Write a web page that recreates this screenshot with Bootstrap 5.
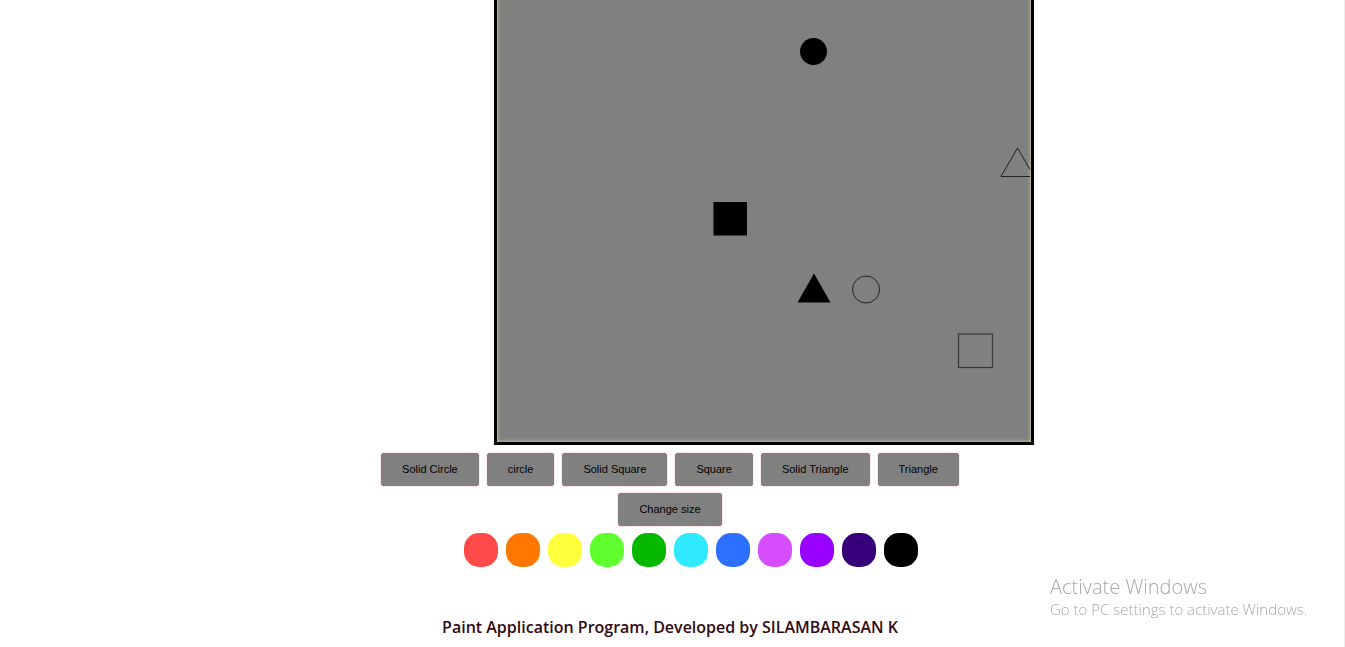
<!DOCTYPE html>
<html lang="en">
<head>
<meta charset="utf-8">
<meta name="viewport" content="width=device-width, initial-scale=1">
<title>Paint Application</title>
<link href="https://cdn.jsdelivr.net/npm/bootstrap@5.3.0/dist/css/bootstrap.min.css" rel="stylesheet">
<style>
  body { background: #fff; color: #000; font-family: "Liberation Sans", Arial, sans-serif; }
  .page { border-right: 1px solid #eee; padding-right: 4px; min-height: 100vh; }
  .board-row { padding-left: 188px; }
  .board { width: 540px; height: 445px; border: 3px solid #000; border-top: 0; background: #808080; box-shadow: inset 3px 0 3px -2px #c0b890, inset -3px 0 3px -2px #c0b890, inset 0 -3px 3px -2px #c0b890; border-radius: 0 0 1px 1px; }
  .board svg { display: block; width: 100%; height: 100%; }
  .tools { max-width: 600px; column-gap: 8px; row-gap: 7px; }
  .tool { --bs-btn-padding-x: 20px; --bs-btn-padding-y: 0; --bs-btn-font-size: 11px; --bs-btn-color: #000; --bs-btn-bg: #808080; --bs-btn-border-color: #808080; --bs-btn-border-radius: 3px; --bs-btn-hover-bg: #707070; height: 33px; box-shadow: 0 0 1px 0 #f02040; }
  .swatches { gap: 8px; padding-left: 42px; margin-top: 7px; }
  .swatch { width: 34px; height: 34px; border-radius: 15px; }
  .credit { color: #300a10; font: 600 16px/24px "Open Sans", sans-serif; }
  .notice { right: 40px; bottom: 28px; width: 255px; color: #a8a8a8; font-family: "Open Sans", sans-serif; font-weight: 300; }
  .notice-title { font-size: 20px; line-height: 25px; }
  .notice-text { font-size: 15px; line-height: 20px; }
</style>
</head>
<body>
<main class="page d-flex flex-column align-items-center">
  <div class="board-row">
    <div class="board">
      <svg viewBox="0 0 534 442" role="img" aria-label="Drawing board">
        <circle cx="316.500" cy="51.500" r="13.500"/>
        <rect x="216.500" y="202" width="33.500" height="33.500"/>
        <path d="M317 273.500L333.500 302.500H300.500Z"/>
        <g fill="none" stroke="#222" stroke-width="1">
          <circle cx="369" cy="289.500" r="13.500"/>
          <path d="M533 169.500L520.500 148L504 176.500H533"/>
          <rect x="461.500" y="334" width="34" height="33.500" stroke="#383838" stroke-width="1.200"/>
        </g>
      </svg>
    </div>
  </div>
  <div class="tools d-flex flex-wrap justify-content-center mt-2">
    <button type="button" class="btn tool">Solid Circle</button>
    <button type="button" class="btn tool">circle</button>
    <button type="button" class="btn tool">Solid Square</button>
    <button type="button" class="btn tool">Square</button>
    <button type="button" class="btn tool">Solid Triangle</button>
    <button type="button" class="btn tool">Triangle</button>
    <button type="button" class="btn tool">Change size</button>
  </div>
  <div class="swatches d-flex">
    <button type="button" class="swatch border-0 p-0" aria-label="Red" style="background:#ff4a4a"></button>
    <button type="button" class="swatch border-0 p-0" aria-label="Orange" style="background:#ff7700"></button>
    <button type="button" class="swatch border-0 p-0" aria-label="Yellow" style="background:#ffff3c"></button>
    <button type="button" class="swatch border-0 p-0" aria-label="Lime" style="background:#5fff2d"></button>
    <button type="button" class="swatch border-0 p-0" aria-label="Green" style="background:#07b800"></button>
    <button type="button" class="swatch border-0 p-0" aria-label="Cyan" style="background:#2fe9ff"></button>
    <button type="button" class="swatch border-0 p-0" aria-label="Blue" style="background:#2d70ff"></button>
    <button type="button" class="swatch border-0 p-0" aria-label="Pink" style="background:#d64cff"></button>
    <button type="button" class="swatch border-0 p-0" aria-label="Violet" style="background:#9900ff"></button>
    <button type="button" class="swatch border-0 p-0" aria-label="Indigo" style="background:#35007a"></button>
    <button type="button" class="swatch border-0 p-0" aria-label="Black" style="background:#000"></button>
  </div>
  <h1 class="credit mt-5 mb-0">Paint Application Program, Developed by SILAMBARASAN K</h1>
</main>
<aside class="notice position-fixed text-nowrap">
  <div class="notice-title">Activate Windows</div>
  <div class="notice-text">Go to PC settings to activate Windows.</div>
</aside>
<script src="https://cdn.jsdelivr.net/npm/bootstrap@5.3.0/dist/js/bootstrap.bundle.min.js"></script>
</body>
</html>
